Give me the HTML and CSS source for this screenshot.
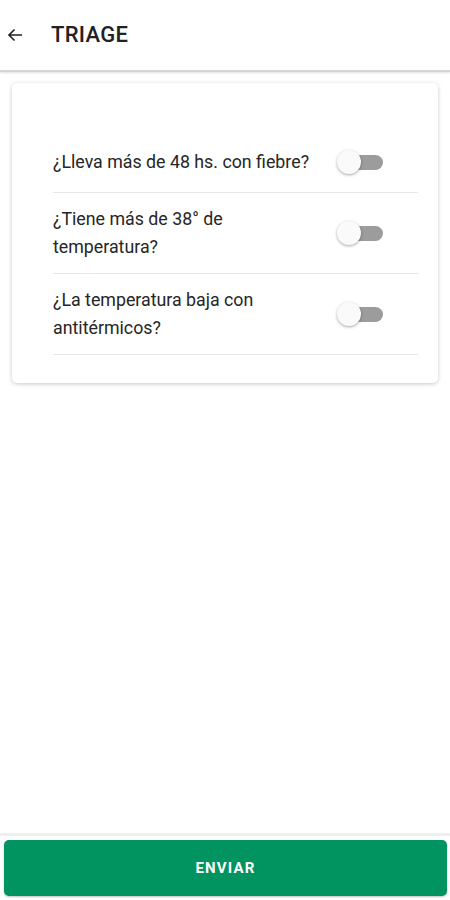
FILE: index.html
```html
<!DOCTYPE html>
<html lang="es">
<head>
<meta charset="utf-8">
<title>Triage</title>
<link rel="stylesheet" href="styles.css">
</head>
<body>
<div class="app">
  <header class="topbar">
    <button class="back" aria-label="Volver">
      <svg width="16" height="14" viewBox="0 0 16 14"><path d="M15 7H2M7.5 1.5L2 7l5.5 5.5" fill="none" stroke="#222" stroke-width="1.6"/></svg>
    </button>
    <h1 class="title">TRIAGE</h1>
  </header>
  <main class="content">
    <section class="card">
      <div class="row">
        <span class="question">¿Lleva más de 48 hs. con fiebre?</span>
        <span class="switch-wrap"><span class="switch"><span class="track"></span><span class="thumb"></span></span></span>
      </div>
      <div class="row">
        <span class="question">¿Tiene más de 38° de temperatura?</span>
        <span class="switch-wrap"><span class="switch"><span class="track"></span><span class="thumb"></span></span></span>
      </div>
      <div class="row">
        <span class="question">¿La temperatura baja con antitérmicos?</span>
        <span class="switch-wrap"><span class="switch"><span class="track"></span><span class="thumb"></span></span></span>
      </div>
    </section>
  </main>
  <footer class="bottom">
    <button class="send">ENVIAR</button>
  </footer>
</div>
</body>
</html>
```
FILE: styles.css
```css
* { box-sizing: border-box; }
html, body { margin: 0; padding: 0; background: #fff; }
body { font-family: Roboto, "Noto Sans", sans-serif; color: #212121; }
.app { height: 900px; display: flex; flex-direction: column; }
.topbar {
  height: 72px;
  display: flex;
  align-items: center;
  border-bottom: 2px solid #d6d6d6;
  box-shadow: 0 1px 2px rgba(0,0,0,0.12);
  padding-bottom: 1px;
}
.back {
  width: 51px;
  height: 40px;
  border: 0;
  background: none;
  padding: 0 0 0 7px;
  display: flex;
  align-items: center;
}
.title {
  margin: 0;
  font-size: 22px;
  font-weight: 500;
  letter-spacing: 0.3px;
  color: #222;
}
.content { flex: 1; padding: 11px 12px 0; }
.card {
  background: #fff;
  border-radius: 5px;
  box-shadow: 0 1px 4px rgba(0,0,0,0.22);
  padding: 49px 20px 28px 41px;
}
.row {
  display: flex;
  align-items: center;
  min-height: 61px;
  padding: 12px 0;
  border-bottom: 1px solid #e6e6e6;
}
.row + .row { min-height: 81px; padding: 11px 0; }
.question {
  flex: 1;
  font-size: 17.8px;
  line-height: 28.5px;
  color: #262626;
  padding-right: 6px;
  max-width: 278px;
}
.switch-wrap { width: 93px; display: flex; padding-left: 12px; margin-left: auto; }
.switch { position: relative; width: 46px; height: 24px; display: block; }
.track {
  position: absolute;
  left: 6px;
  top: 5px;
  width: 40px;
  height: 15px;
  border-radius: 8px;
  background: #9c9c9c;
}
.thumb {
  position: absolute;
  left: 0;
  top: 0;
  width: 24px;
  height: 24px;
  border-radius: 50%;
  background: #fafafa;
  box-shadow: 0 1px 3px rgba(0,0,0,0.35);
}
.bottom {
  border-top: 3px solid #efefef;
  padding: 4px 3px 4px 4px;
}
.send {
  width: 100%;
  height: 56px;
  border: 0;
  border-radius: 5px;
  background: #019461;
  color: #fff;
  font-family: Roboto, "Noto Sans", sans-serif;
  font-size: 15px;
  font-weight: 700;
  letter-spacing: 1.2px;
  box-shadow: 0 1px 2px rgba(0,0,0,0.25);
}
```
